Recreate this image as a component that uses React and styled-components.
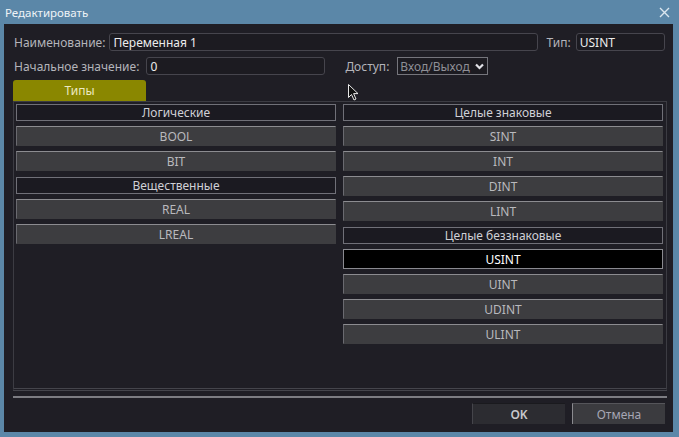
import React from "react";
import styled, { createGlobalStyle } from "styled-components";

const Global = createGlobalStyle`
  html, body { margin: 0; padding: 0; background: #5b87a8; }
  body { font-family: "Noto Sans", "Open Sans", sans-serif; }
  * { box-sizing: border-box; }
`;

const Win = styled.div`
  width: 679px;
  height: 437px;
  background: #5b87a8;
  display: flex;
  flex-direction: column;
  position: relative;
`;

const TitleBar = styled.div`
  height: 24px;
  display: flex;
  align-items: center;
  justify-content: space-between;
  padding: 0 9px 0 5px;
  color: #eef3f7;
  font-size: 11.5px;
`;

const Close = styled.svg`
  width: 11px;
  height: 11px;
`;

const Body = styled.div`
  flex: 1;
  margin: 0 6px 5px 4px;
  background: #1f1e25;
  padding: 9px 6px 8px 9px;
  display: flex;
  flex-direction: column;
`;

const FormRow = styled.div`
  display: flex;
  align-items: center;
  height: 18px;
  margin-bottom: ${(p) => p.mb || 0}px;
  padding-left: 1px;
`;

const Label = styled.span`
  color: #b4b4ba;
  font-size: 12px;
  margin-left: ${(p) => p.ml || 0}px;
  margin-right: ${(p) => p.mr || 4}px;
  white-space: nowrap;
`;

const Input = styled.div`
  width: ${(p) => p.w}px;
  height: 18px;
  border: 1px solid #46454d;
  border-radius: 3px;
  background: #1c1b21;
  color: #ececec;
  font-size: 12px;
  display: flex;
  align-items: center;
  padding-left: 3px;
`;

const Select = styled.div`
  width: 91px;
  height: 18px;
  border: 1px solid #75757c;
  background: #1c1b21;
  color: #8f8f96;
  font-size: 12px;
  display: flex;
  align-items: center;
  padding: 0 3px 0 2px;
  overflow: hidden;
  white-space: nowrap;
`;

const SelectText = styled.span`
  flex: 1;
  overflow: hidden;
`;

const TabBar = styled.div`
  display: flex;
  height: 21px;
`;

const Tab = styled.div`
  width: 133px;
  background: #8a8700;
  border-radius: 3px 3px 0 0;
  color: #ece9c0;
  font-size: 12px;
  display: flex;
  align-items: center;
  justify-content: center;
`;

const Panel = styled.div`
  height: 290px;
  border: 1px solid #3c3c43;
  border-bottom: 3px double #45454c;
  padding: 2px 3px 0 2px;
  display: grid;
  grid-template-columns: 1fr 1fr;
  column-gap: 7px;
  align-items: start;
`;

const Column = styled.div`
  display: flex;
  flex-direction: column;
  gap: 5px;
`;

const Header = styled.div`
  height: 17px;
  border: 1px solid #707078;
  background: #1b1a21;
  color: #d0d0d6;
  font-size: 12px;
  display: flex;
  align-items: center;
  justify-content: center;
  &:not(:first-child) {
    margin-top: 1px;
  }
`;

const TypeBtn = styled.div`
  height: 20px;
  background: ${(p) => (p.active ? "#000" : "#3d3d40")};
  border: 1px solid ${(p) => (p.active ? "#8a8a90" : "#3d3d40")};
  border-top-color: ${(p) => (p.active ? "#8a8a90" : "#8c8c90")};
  border-left-color: ${(p) => (p.active ? "#8a8a90" : "#6a6a70")};
  color: ${(p) => (p.active ? "#ffffff" : "#b9b9bd")};
  font-size: 12px;
  display: flex;
  align-items: center;
  justify-content: center;
`;

const Separator = styled.div`
  height: 2px;
  background: #7d7d83;
  margin-top: 5px;
`;

const Footer = styled.div`
  display: flex;
  justify-content: flex-end;
  gap: 7px;
  margin-top: 5px;
  padding-right: 2px;
`;

const FootBtn = styled.div`
  width: 93px;
  height: 21px;
  background: ${(p) => (p.primary ? "#2c2c31" : "#3b3b3f")};
  border-top: 1px solid ${(p) => (p.primary ? "#1a1a1e" : "#55555a")};
  border-left: 1px solid ${(p) => (p.primary ? "#45454b" : "#8a8a8f")};
  color: ${(p) => (p.primary ? "#c8c8cc" : "#a6a6b4")};
  font-size: 12px;
  font-weight: ${(p) => (p.primary ? 600 : 400)};
  display: flex;
  align-items: center;
  justify-content: center;
`;

const Cursor = styled.svg`
  position: absolute;
  left: 348px;
  top: 84px;
  width: 11px;
  height: 17px;
`;

const left = [
  { h: "Логические" },
  { b: "BOOL" },
  { b: "BIT" },
  { h: "Вещественные" },
  { b: "REAL" },
  { b: "LREAL" },
];

const right = [
  { h: "Целые знаковые" },
  { b: "SINT" },
  { b: "INT" },
  { b: "DINT" },
  { b: "LINT" },
  { h: "Целые беззнаковые" },
  { b: "USINT", active: true },
  { b: "UINT" },
  { b: "UDINT" },
  { b: "ULINT" },
];

const renderItems = (items) =>
  items.map((it, i) =>
    it.h ? (
      <Header key={i}>{it.h}</Header>
    ) : (
      <TypeBtn key={i} active={it.active}>{it.b}</TypeBtn>
    )
  );

export default function App() {
  return (
    <>
      <Global />
      <Win>
        <TitleBar>
          <span>Редактировать</span>
          <Close viewBox="0 0 11 11">
            <path d="M1 1 L10 10 M10 1 L1 10" stroke="#dbe6ef" strokeWidth="1.4" />
          </Close>
        </TitleBar>
        <Body>
          <FormRow mb={6}>
            <Label>Наименование:</Label>
            <Input w={429}>Переменная 1</Input>
            <Label ml={8} mr={5}>Тип:</Label>
            <Input w={89}>USINT</Input>
          </FormRow>
          <FormRow mb={5}>
            <Label mr={7}>Начальное значение:</Label>
            <Input w={179}>0</Input>
            <Label ml={20} mr={8}>Доступ:</Label>
            <Select>
              <SelectText>Вход/Выход</SelectText>
              <svg width="9" height="7" viewBox="0 0 9 7">
                <path d="M1 1.5 L4.5 5 L8 1.5" stroke="#e2e2e8" strokeWidth="2.2" fill="none" />
              </svg>
            </Select>
          </FormRow>
          <TabBar>
            <Tab>Типы</Tab>
          </TabBar>
          <Panel>
            <Column>{renderItems(left)}</Column>
            <Column>{renderItems(right)}</Column>
          </Panel>
          <Separator />
          <Footer>
            <FootBtn primary>OK</FootBtn>
            <FootBtn>Отмена</FootBtn>
          </Footer>
        </Body>
        <Cursor viewBox="0 0 11 17">
          <path d="M0.5 0.5 L0.5 13.5 L3.5 10.5 L6 16 L8 15 L5.6 9.6 L10 9.6 Z" fill="#111" stroke="#e8e8e8" strokeWidth="1" />
        </Cursor>
      </Win>
    </>
  );
}
